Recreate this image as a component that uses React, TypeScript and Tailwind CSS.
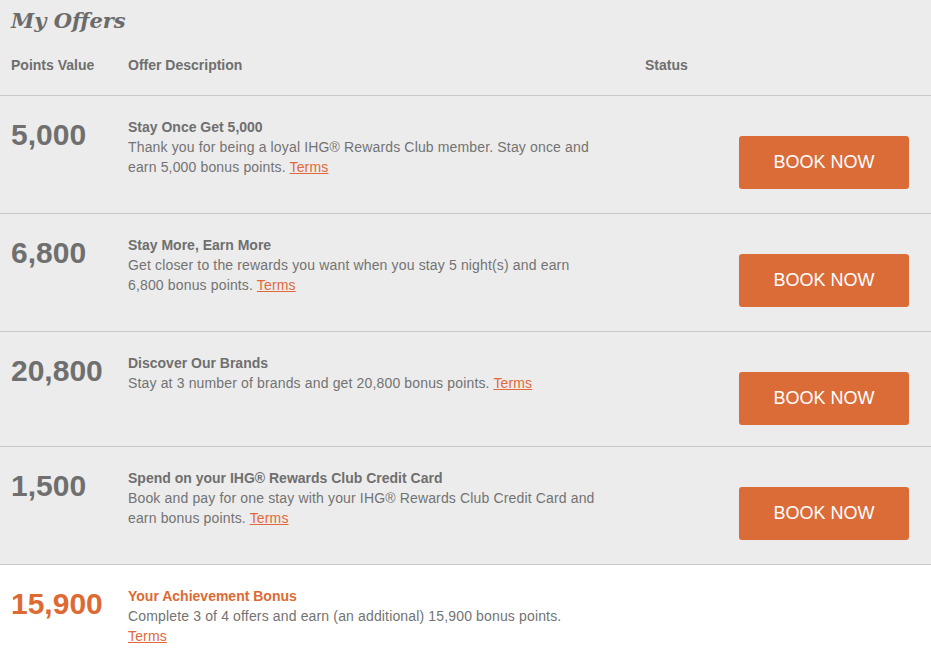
import React from 'react'

type Offer = {
    points: string
    title: string
    text: string
}

const offers: Offer[] = [
    {
        points: '5,000',
        title: 'Stay Once Get 5,000',
        text: 'Thank you for being a loyal IHG® Rewards Club member. Stay once and earn 5,000 bonus points.',
    },
    {
        points: '6,800',
        title: 'Stay More, Earn More',
        text: 'Get closer to the rewards you want when you stay 5 night(s) and earn 6,800 bonus points.',
    },
    {
        points: '20,800',
        title: 'Discover Our Brands',
        text: 'Stay at 3 number of brands and get 20,800 bonus points.',
    },
    {
        points: '1,500',
        title: 'Spend on your IHG® Rewards Club Credit Card',
        text: 'Book and pay for one stay with your IHG® Rewards Club Credit Card and earn bonus points.',
    },
]

const Terms: React.FC = () => (
    <a href="#" className="text-[#e0693a] underline underline-offset-[1px] decoration-1">
        Terms
    </a>
)

const OfferRow: React.FC<{ offer: Offer }> = ({ offer }) => (
    <div className="flex items-start border-b border-[#c9c9c9]">
        <div className="w-[128px] shrink-0 pl-[11px] pt-[21px] text-[30px] leading-[36px] font-bold text-[#6f6f6f]">
            {offer.points}
        </div>
        <div className="w-[468px] shrink-0 pt-[21px] pb-[36px]">
            <div className="text-[14px] leading-[20px] font-bold text-[#6f6f6f]">{offer.title}</div>
            <p className="text-[14px] leading-[20px] tracking-[0.15px] text-[#737373]">
                {offer.text} <Terms />
            </p>
        </div>
        <div className="flex-1 flex justify-end pr-[22px]">
            <button className="mt-[40px] mb-[21px] h-[53px] w-[170px] rounded-[3px] bg-[#db6c37] text-[18px] text-white">
                BOOK NOW
            </button>
        </div>
    </div>
)

export default function App() {
    return (
        <div className="min-h-[672px] bg-white font-['Liberation_Sans',Arial,sans-serif]">
            <div className="bg-[#ececec]">
                <h1 className="pl-[11px] pt-[6px] text-[21px] leading-[30px] font-bold italic text-[#6b6b6b] font-['DejaVu_Serif',Georgia,serif]">
                    My Offers
                </h1>
                <div className="mt-[19px] flex h-[41px] border-b border-[#c9c9c9] text-[14px] leading-[20px] font-bold text-[#6f6f6f]">
                    <div className="w-[128px] pl-[11px]">Points Value</div>
                    <div className="w-[517px]">Offer Description</div>
                    <div>Status</div>
                </div>
                {offers.map((o) => (
                    <OfferRow key={o.points} offer={o} />
                ))}
            </div>
            <div className="flex items-start">
                <div className="w-[128px] shrink-0 pl-[11px] pt-[21px] text-[30px] leading-[36px] font-bold text-[#de6a33]">
                    15,900
                </div>
                <div className="w-[468px] shrink-0 pt-[21px] pb-[20px]">
                    <div className="text-[14px] leading-[20px] font-bold text-[#de6a33]">Your Achievement Bonus</div>
                    <p className="text-[14px] leading-[20px] tracking-[0.15px] text-[#737373]">
                        Complete 3 of 4 offers and earn (an additional) 15,900 bonus points. <Terms />
                    </p>
                </div>
            </div>
        </div>
    )
}
